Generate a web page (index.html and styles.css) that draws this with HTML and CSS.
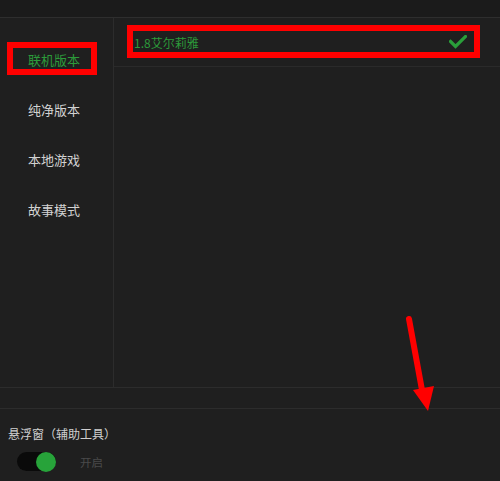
FILE: index.html
```html
<!DOCTYPE html>
<html lang="zh-CN">
<head>
<meta charset="utf-8">
<link rel="stylesheet" href="styles.css">
</head>
<body>
<div class="app">
  <div class="topbar"></div>
  <div class="main">
    <nav class="sidebar">
      <div class="nav-item active">联机版本</div>
      <div class="nav-item">纯净版本</div>
      <div class="nav-item">本地游戏</div>
      <div class="nav-item">故事模式</div>
    </nav>
    <section class="content">
      <div class="version-row marked">
        <span class="version-name">1.8艾尔莉雅</span>
        <svg class="check" width="18" height="14" viewBox="0 0 18 14"><polyline points="1.5,6.5 6.5,11.5 16.5,1.5" fill="none" stroke="#2a9e3a" stroke-width="3.2" stroke-linecap="square"/></svg>
      </div>
    </section>
  </div>
  <div class="band"></div>
  <div class="footer">
    <div class="footer-title">悬浮窗（辅助工具）</div>
    <div class="toggle-row">
      <div class="toggle"><div class="knob"></div></div>
      <span class="toggle-label">开启</span>
    </div>
  </div>
  <svg class="arrow" width="500" height="481" viewBox="0 0 500 481">
    <line x1="409" y1="319" x2="422" y2="390" stroke="#ff0000" stroke-width="6" stroke-linecap="round"/>
    <polygon points="413,390 434,386 428,411" fill="#ff0000"/>
  </svg>
</div>
</body>
</html>
```

FILE: styles.css
```css
html, body {
  margin: 0;
  padding: 0;
  background: #1f1f1f;
}
body {
  font-family: "Noto Sans CJK SC", "Noto Sans", sans-serif;
  width: 500px;
  height: 481px;
  overflow: hidden;
}
.app {
  position: relative;
  width: 500px;
  height: 481px;
}
.topbar {
  height: 17px;
  background: #1b1b1b;
  border-bottom: 1px solid #2e2e2e;
}
.main {
  display: flex;
  height: 369px;
  border-bottom: 1px solid #2c2c2c;
}
.sidebar {
  width: 114px;
  border-right: 1px solid #2c2c2c;
  padding-top: 17px;
  box-sizing: border-box;
}
.nav-item {
  position: relative;
  height: 50px;
  line-height: 50px;
  padding-left: 28px;
  font-size: 13px;
  color: #d2d2d2;
}
.nav-item.active {
  color: #2c9a3a;
}
.nav-item.active::after {
  content: "";
  position: absolute;
  left: 7px;
  top: 7px;
  width: 90px;
  height: 33px;
  border: 6px solid #ff0000;
  box-sizing: border-box;
}
.content {
  flex: 1;
}
.version-row {
  position: relative;
  height: 48px;
  border-bottom: 1px solid #2a2a2a;
  display: flex;
  align-items: center;
  justify-content: space-between;
  padding: 0 33px 0 20px;
}
.version-row.marked::after {
  content: "";
  position: absolute;
  left: 13px;
  top: 7px;
  width: 353px;
  height: 33px;
  border: 6px solid #ff0000;
  box-sizing: border-box;
}
.version-name {
  font-size: 12px;
  color: #2c9a3a;
}
.check {
  display: block;
}
.band {
  height: 20px;
  border-bottom: 1px solid #2c2c2c;
}
.footer {
  padding: 17px 0 0 8px;
}
.footer-title {
  font-size: 12px;
  line-height: 16px;
  color: #d0d0d0;
}
.toggle-row {
  display: flex;
  align-items: center;
  margin-top: 10px;
  padding-left: 9px;
}
.toggle {
  width: 39px;
  height: 19px;
  border-radius: 10px;
  background: #0a0a0a;
  display: flex;
  justify-content: flex-end;
  align-items: center;
}
.knob {
  width: 20px;
  height: 20px;
  border-radius: 50%;
  background: #27a33a;
}
.toggle-label {
  margin-left: 24px;
  font-size: 11.5px;
  color: #4a4a4a;
}
.arrow {
  position: absolute;
  left: 0;
  top: 0;
  pointer-events: none;
}
```
